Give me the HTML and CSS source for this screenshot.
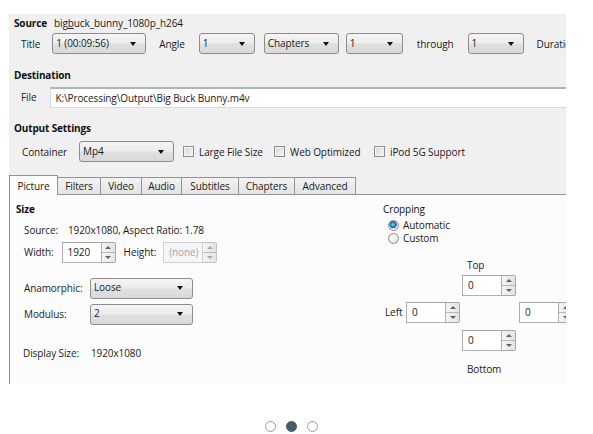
FILE: index.html
```html
<!DOCTYPE html>
<html lang="en">
<head>
<meta charset="utf-8">
<title>HandBrake – Picture settings</title>
<link rel="stylesheet" href="styles.css">
</head>
<body>
<main class="slide">
  <section class="shot">
    <div class="row r-source">
      <b class="head">Source</b>
      <span class="srcname">big<u>b</u>uck_bunny_1080p_h264</span>
    </div>
    <div class="row r-title">
      <span class="lbl">Title</span>
      <span class="combo c-title"><span class="ctext">1 (00:09:56)</span><i class="arr"></i></span>
      <span class="lbl t-angle">Angle</span>
      <span class="combo c-angle"><span class="ctext">1</span><i class="arr"></i></span>
      <span class="combo c-chap"><span class="ctext">Chapters</span><i class="arr"></i></span>
      <span class="combo c-from"><span class="ctext">1</span><i class="arr"></i></span>
      <span class="lbl t-through">through</span>
      <span class="combo c-to"><span class="ctext">1</span><i class="arr"></i></span>
      <span class="lbl t-dur">Duration</span>
    </div>

    <div class="row r-dest"><b class="head">Destination</b></div>
    <div class="row r-file">
      <span class="lbl">File</span>
      <span class="textbox file-box">K:\Processing\Output\Big Buck Bunny.m4v</span>
    </div>

    <div class="row r-out"><b class="head">Output Settings</b></div>
    <div class="row r-cont">
      <span class="lbl">Container</span>
      <span class="combo c-cont"><span class="ctext">Mp4</span><i class="arr"></i></span>
      <span class="chk ch-1"></span><span class="chk-lbl cl-1">Large File Size</span>
      <span class="chk"></span><span class="chk-lbl cl-2">Web Optimized</span>
      <span class="chk"></span><span class="chk-lbl">iPod 5G Support</span>
    </div>

    <nav class="tabs">
      <span class="tab active w-pic">Picture</span>
      <span class="tab w-fil">Filters</span>
      <span class="tab w-vid">Video</span>
      <span class="tab w-aud">Audio</span>
      <span class="tab w-sub">Subtitles</span>
      <span class="tab w-chp">Chapters</span>
      <span class="tab w-adv">Advanced</span>
    </nav>

    <div class="panel">
      <div class="col-size">
        <div class="prow p-head"><b class="head">Size</b></div>
        <div class="prow p-src"><span class="src-lbl">Source:</span><span>1920x1080, Aspect Ratio: 1.78</span></div>
        <div class="prow p-wh">
          <span class="lbl">Width:</span>
          <span class="spin sp-w"><span class="field">1920</span><span class="spinbtn"><i class="up"></i><i class="dn"></i></span></span>
          <span class="lbl t-height">Height:</span>
          <span class="spin sp-h disabled"><span class="field">(none)</span><span class="spinbtn"><i class="up"></i><i class="dn"></i></span></span>
        </div>
        <div class="prow p-ana">
          <span class="flbl">Anamorphic:</span>
          <span class="combo c-wide"><span class="ctext">Loose</span><i class="arr"></i></span>
        </div>
        <div class="prow p-mod">
          <span class="flbl">Modulus:</span>
          <span class="combo c-wide"><span class="ctext">2</span><i class="arr"></i></span>
        </div>
        <div class="prow p-disp">
          <span class="flbl">Display Size:</span>
          <span>1920x1080</span>
        </div>
      </div>

      <div class="col-crop">
        <div class="prow p-head"><span class="crop-title">Cropping</span></div>
        <div class="radio-row r-auto"><span class="radio on"></span><span>Automatic</span></div>
        <div class="radio-row"><span class="radio"></span><span>Custom</span></div>

        <div class="crop-grid">
          <span class="g-top-lbl">Top</span>
          <span class="spin g-top"><span class="field">0</span><span class="spinbtn"><i class="up"></i><i class="dn"></i></span></span>
          <span class="g-left-lbl">Left</span>
          <span class="spin g-left"><span class="field">0</span><span class="spinbtn"><i class="up"></i><i class="dn"></i></span></span>
          <span class="spin g-right"><span class="field">0</span><span class="spinbtn"><i class="up"></i><i class="dn"></i></span></span>
          <span class="spin g-bottom"><span class="field">0</span><span class="spinbtn"><i class="up"></i><i class="dn"></i></span></span>
          <span class="g-bottom-lbl">Bottom</span>
        </div>
      </div>
    </div>
  </section>

  <div class="dots">
    <span class="dot"></span>
    <span class="dot active"></span>
    <span class="dot"></span>
  </div>
</main>
</body>
</html>
```

FILE: styles.css
```css
* { box-sizing: border-box; }

html, body {
  margin: 0;
  padding: 0;
  background: #ffffff;
}

body {
  font-family: "Open Sans", "Noto Sans", "DejaVu Sans", sans-serif;
  font-size: 10px;
  letter-spacing: -0.1px;
  color: #1b1b1b;
}

.slide {
  width: 593px;
  height: 434px;
  padding: 14px 0 0 9px;
  overflow: hidden;
}

.shot {
  width: 557px;
  height: 370px;
  background: #f0f0f0;
  overflow: hidden;
  display: flex;
  flex-direction: column;
}

.row {
  display: flex;
  align-items: center;
  white-space: nowrap;
  flex: none;
}

.head { font-weight: 700; color: #111; letter-spacing: -0.15px; }
.lbl { flex: none; }

/* ---- header rows ---- */
.r-source { height: 18px; padding-left: 5px; }
.srcname { margin-left: 7px; }
.srcname u { text-decoration-thickness: 1px; text-underline-offset: 1px; }

.r-title { height: 23px; padding-left: 12px; }
.c-title { width: 94px; margin-left: 12px; }
.t-angle { margin-left: 13px; }
.c-angle { width: 56px; margin-left: 14px; }
.c-chap { width: 75px; margin-left: 9px; }
.c-from { width: 57px; margin-left: 7px; }
.t-through { margin-left: 14px; }
.c-to { width: 56px; margin-left: 14px; }
.t-dur { margin-left: 13px; }

.r-dest { height: 18px; margin-top: 11px; padding-left: 5px; }

.r-file { height: 22px; margin-top: 2px; padding-left: 12px; }
.textbox {
  flex: none;
  height: 21px;
  display: flex;
  align-items: center;
  background: #ffffff;
  border: 1px solid #d5dbe0;
  border-top: 2px solid #a9b5bd;
  padding-left: 4px;
}
.file-box { width: 530px; margin-left: 14px; }

.r-out { height: 18px; margin-top: 11px; padding-left: 5px; }

.r-cont { height: 23px; margin-top: 3px; padding-left: 13px; }
.c-cont { width: 95px; margin-left: 12px; }
.chk {
  flex: none;
  width: 11px;
  height: 11px;
  border: 1px solid #8e8f8f;
  background: linear-gradient(135deg, #d6d6d6, #f7f7f7);
  box-shadow: inset 0 0 0 1px #f2f2f2;
}
.ch-1 { margin-left: 9px; }
.chk-lbl { flex: none; margin-left: 5px; }
.cl-1 { width: 75px; }
.cl-2 { width: 84px; }

/* ---- combo box ---- */
.combo {
  flex: none;
  height: 21px;
  display: flex;
  align-items: center;
  border: 1px solid #8d8d8d;
  border-radius: 3px;
  background: linear-gradient(#f5f5f5, #ececec 48%, #e0e0e0 52%, #d9d9d9);
  padding: 0 9px 2px 3px;
}
.ctext { flex: 1; }
.arr {
  flex: none;
  width: 0;
  height: 0;
  margin-top: 2px;
  border-left: 3.5px solid transparent;
  border-right: 3.5px solid transparent;
  border-top: 4px solid #111;
}

/* ---- tabs ---- */
.tabs {
  flex: none;
  display: flex;
  align-items: flex-end;
  height: 20px;
  margin-top: 12px;
  border-bottom: 1px solid #8f939b;
}
.tab {
  flex: none;
  height: 17px;
  display: flex;
  align-items: center;
  justify-content: center;
  border: 1px solid #8f939b;
  border-bottom: none;
  margin-left: -1px;
  background: linear-gradient(#f3f3f3, #e4e4e4);
  color: #1b1b1b;
}
.tab.active {
  height: 20px;
  margin-left: 0;
  margin-bottom: -1px;
  background: #fcfcfc;
  position: relative;
  z-index: 1;
}
.w-pic { width: 49px; }
.w-fil { width: 44px; }
.w-vid { width: 42px; }
.w-aud { width: 41px; }
.w-sub { width: 58px; }
.w-chp { width: 57px; }
.w-adv { width: 62px; }

/* ---- panel ---- */
.panel {
  flex: 1;
  display: flex;
  background: #fcfcfc;
  border-left: 1px solid #8f939b;
}

.prow {
  display: flex;
  align-items: center;
  white-space: nowrap;
}

.col-size {
  flex: none;
  width: 373px;
  padding: 5px 0 0 6px;
  display: flex;
  flex-direction: column;
}
.p-head { height: 18px; }
.p-src { height: 18px; margin-top: 3px; padding-left: 8px; }
.src-lbl { width: 44px; flex: none; }
.p-wh { height: 22px; margin-top: 2px; padding-left: 8px; }
.sp-w { margin-left: 8px; }
.t-height { margin-left: 8px; }
.sp-h { margin-left: 7px; }
.p-ana { height: 22px; margin-top: 14px; padding-left: 8px; }
.p-mod { height: 22px; margin-top: 4px; padding-left: 8px; }
.p-disp { height: 18px; margin-top: 19px; padding-left: 7px; }
.flbl { width: 66px; flex: none; }
.p-disp .flbl { width: 68px; }
.c-wide { width: 103px; }

/* ---- spin boxes ---- */
.spin {
  flex: none;
  display: flex;
  height: 21px;
}
.field {
  width: 40px;
  height: 21px;
  display: flex;
  align-items: center;
  padding-left: 5px;
  background: #ffffff;
  border: 1px solid #acb0b6;
  border-top-color: #9ea4ab;
}
.spinbtn {
  width: 14px;
  height: 21px;
  display: flex;
  flex-direction: column;
  border: 1px solid #a7a7a7;
  border-left: none;
  border-radius: 0 2px 2px 0;
  background: linear-gradient(90deg, #f4f4f4, #e3e3e3);
}
.spinbtn .up, .spinbtn .dn {
  flex: 1;
  display: flex;
  align-items: center;
  justify-content: center;
}
.spinbtn .up { border-bottom: 1px solid #b9b9b9; }
.spinbtn .up::before, .spinbtn .dn::before {
  content: "";
  width: 0;
  height: 0;
  border-left: 3px solid transparent;
  border-right: 3px solid transparent;
}
.spinbtn .up::before { border-bottom: 3px solid #5f6368; }
.spinbtn .dn::before { border-top: 3px solid #5f6368; }
.spin.disabled .field {
  color: #a4a4a4;
  background: #f6f6f6;
  border-color: #cfd1d4;
}
.spin.disabled .spinbtn { border-color: #c3c3c3; }
.spin.disabled .spinbtn .up::before { border-bottom-color: #a7a9ac; }
.spin.disabled .spinbtn .dn::before { border-top-color: #a7a9ac; }

/* ---- cropping ---- */
.col-crop {
  flex: none;
  padding-top: 5px;
  display: flex;
  flex-direction: column;
}
.crop-title { color: #111; }
.radio-row {
  display: flex;
  align-items: center;
  height: 13px;
  padding-left: 5px;
  white-space: nowrap;
}
.r-auto { margin-top: 0.5px; }
.radio {
  flex: none;
  width: 11px;
  height: 11px;
  border-radius: 50%;
  border: 1px solid #8e8f8f;
  background: radial-gradient(circle at 40% 35%, #ffffff, #d9d9d9);
  margin-right: 4px;
}
.radio.on {
  background: radial-gradient(circle at 45% 40%, #7fd0f4 0, #2c92cf 2px, #17609a 3.4px, #d9d9d9 3.9px, #f0f0f0 5px);
}

.crop-grid {
  margin-top: 12px;
  display: grid;
  grid-template-columns: 23px 56px 57px 56px;
  grid-template-rows: 18px 27px 28px 31px 16px;
  align-items: start;
  white-space: nowrap;
}
.g-top-lbl { grid-column: 3; grid-row: 1; padding-left: 5px; line-height: 16px; }
.g-top { grid-column: 3; grid-row: 2; }
.g-left-lbl { grid-column: 1; grid-row: 3; line-height: 21px; padding-left: 2px; }
.g-left { grid-column: 2; grid-row: 3; }
.g-right { grid-column: 4; grid-row: 3; }
.g-bottom { grid-column: 3; grid-row: 4; }
.g-bottom-lbl { grid-column: 3; grid-row: 5; padding-left: 5px; line-height: 16px; }

/* ---- carousel dots ---- */
.dots {
  width: 565px;
  margin-top: 37px;
  display: flex;
  justify-content: center;
  gap: 10px;
}
.dot {
  width: 11px;
  height: 11px;
  border-radius: 50%;
  border: 1.5px solid #9c9c9c;
  background: #ffffff;
}
.dot.active {
  background: #485c6b;
  border-color: #485c6b;
}
```
